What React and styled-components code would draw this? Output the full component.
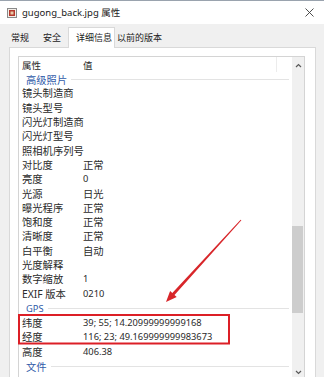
import React from "react";
import styled, { createGlobalStyle } from "styled-components";

const Global = createGlobalStyle`
  html, body { margin: 0; padding: 0; background: #f0f0f0; }
  body { width: 324px; height: 377px; overflow: hidden; font-family: "Noto Sans", "Noto Sans CJK SC", sans-serif; color: #2a2a2a; }
`;

const Window = styled.div`
  position: relative;
  width: 324px;
  height: 377px;
  overflow: hidden;
  display: flex;
  flex-direction: column;
  background: #f0f0f0;
  border-top: 1px solid #9aa3ae;
  box-sizing: border-box;
`;

const TitleBar = styled.div`
  height: 23px;
  flex: none;
  background: #fff;
  display: flex;
  align-items: center;
  padding: 0 10px 0 7px;
  gap: 5px;
`;

const Title = styled.div`
  flex: 1;
  font-size: 9.5px;
  line-height: 12px;
  color: #1a1a1a;
`;

const TabStrip = styled.div`
  height: 23px;
  flex: none;
  display: flex;
  align-items: flex-end;
  padding-left: 4px;
`;

const Tab = styled.div`
  height: ${(p) => (p.$active ? 21 : 19)}px;
  box-sizing: border-box;
  display: flex;
  align-items: center;
  padding: 0 ${(p) => p.$pr}px 2px ${(p) => p.$pl}px;
  margin-bottom: ${(p) => (p.$active ? -1 : 0)}px;
  font-size: 9px;
  color: #222;
  white-space: nowrap;
  background: ${(p) => (p.$active ? "#fff" : "transparent")};
  border: 1px solid ${(p) => (p.$active ? "#d9d9d9" : "transparent")};
  border-bottom: none;
  position: relative;
  z-index: 1;
`;

const Body = styled.div`
  flex: 1;
  padding: 0 8px 0 9px;
  display: flex;
  min-height: 0;
`;

const Panel = styled.div`
  flex: 1;
  background: #fff;
  border: 1px solid #d9d9d9;
  border-bottom: none;
  padding: 8px 10px 0 8px;
`;

const ListView = styled.div`
  height: 326px;
  box-sizing: border-box;
  border: 1px solid #d4d4d4;
  display: flex;
  overflow: hidden;
`;

const Table = styled.div`
  flex: 1;
  display: flex;
  flex-direction: column;
`;

const HeaderRow = styled.div`
  height: 15px;
  flex: none;
  display: grid;
  grid-template-columns: 64px 194px 1fr;
  font-size: 9.5px;
  align-items: center;
  color: #2a2a2a;
`;

const HeaderCell = styled.div`
  padding-left: ${(p) => p.$pl}px;
  height: 100%;
  display: flex;
  align-items: center;
  border-right: ${(p) => (p.$divider ? "1px solid #ececec" : "none")};
`;

const Row = styled.div`
  height: 14.3px;
  flex: none;
  display: grid;
  grid-template-columns: 64px 1fr;
  align-items: center;
  white-space: nowrap;
`;

const Name = styled.div`
  padding-left: 3px;
  font-size: 10.3px;
  line-height: 14px;
`;

const Value = styled.div`
  font-size: ${(p) => (p.$latin ? 9.3 : 10.3)}px;
  line-height: 14px;
`;

const GroupRow = styled.div`
  height: ${(p) => p.$h}px;
  flex: none;
  display: flex;
  align-items: center;
  gap: 4px;
  padding: 0 3px 0 7px;
  font-size: ${(p) => (p.$latin ? 9.3 : 10.3)}px;
  color: #2f5aa8;
`;

const GroupLine = styled.div`
  flex: 1;
  height: 1px;
  background: #e3e3e3;
`;

const ScrollBar = styled.div`
  width: 12px;
  flex: none;
  display: flex;
  flex-direction: column;
  background: #f0f0f0;
`;

const ArrowBtn = styled.div`
  height: 17px;
  flex: none;
  display: flex;
  align-items: center;
  justify-content: center;
`;

const Track = styled.div`
  flex: 1;
  display: flex;
  flex-direction: column;
`;

const Thumb = styled.div`
  margin: 152px 1px 0 0;
  height: 87px;
  background: #cdcdcd;
`;

const Annotation = styled.svg`
  position: absolute;
  left: 0;
  top: 0;
  pointer-events: none;
`;

const rows = [
  { g: "高级照片", h: 14.3 },
  { n: "镜头制造商", v: "" },
  { n: "镜头型号", v: "" },
  { n: "闪光灯制造商", v: "" },
  { n: "闪光灯型号", v: "" },
  { n: "照相机序列号", v: "" },
  { n: "对比度", v: "正常" },
  { n: "亮度", v: "0" },
  { n: "光源", v: "日光" },
  { n: "曝光程序", v: "正常" },
  { n: "饱和度", v: "正常" },
  { n: "清晰度", v: "正常" },
  { n: "白平衡", v: "自动" },
  { n: "光度解释", v: "" },
  { n: "数字缩放", v: "1" },
  { n: "EXIF 版本", v: "0210" },
  { g: "GPS", h: 15.3, latin: true },
  { n: "纬度", v: "39; 55; 14.20999999999168" },
  { n: "经度", v: "116; 23; 49.169999999983673" },
  { n: "高度", v: "406.38" },
  { g: "文件", h: 14.3 },
];

const isLatin = (s) => /^[\x00-\x7f]*$/.test(s);

const PhotoIcon = () => (
  <svg width="10" height="10" viewBox="0 0 10 10">
    <rect x="0.5" y="0.5" width="9" height="9" fill="#f4efe9" stroke="#8a8a8a" />
    <rect x="2" y="2" width="6" height="6" fill="#b4382c" />
    <rect x="3.5" y="3.5" width="3" height="3" fill="#e9c9a8" />
  </svg>
);

const CloseIcon = () => (
  <svg width="9" height="9" viewBox="0 0 9 9">
    <path d="M0.5 0.5 L8.5 8.5 M8.5 0.5 L0.5 8.5" stroke="#3a3a3a" strokeWidth="0.9" />
  </svg>
);

const Chevron = ({ up }) => (
  <svg width="7" height="5" viewBox="0 0 7 5">
    <polyline
      points={up ? "1,4 3.5,1.5 6,4" : "1,1 3.5,3.5 6,1"}
      fill="none"
      stroke="#5a5a5a"
      strokeWidth="1.2"
    />
  </svg>
);

export default function App() {
  return (
    <>
      <Global />
      <Window>
        <TitleBar>
          <PhotoIcon />
          <Title>gugong_back.jpg 属性</Title>
          <CloseIcon />
        </TitleBar>
        <TabStrip>
          <Tab $pl={6} $pr={6}>常规</Tab>
          <Tab $pl={6} $pr={6}>安全</Tab>
          <Tab $active $pl={7} $pr={2}>详细信息</Tab>
          <Tab $pl={1} $pr={7}>以前的版本</Tab>
        </TabStrip>
        <Body>
          <Panel>
            <ListView>
              <Table>
                <HeaderRow>
                  <HeaderCell $pl={3}>属性</HeaderCell>
                  <HeaderCell $pl={0} $divider>值</HeaderCell>
                  <HeaderCell $pl={0} />
                </HeaderRow>
                {rows.map((r, i) =>
                  r.g ? (
                    <GroupRow key={i} $h={r.h} $latin={r.latin}>
                      <span>{r.g}</span>
                      <GroupLine />
                    </GroupRow>
                  ) : (
                    <Row key={i}>
                      <Name>{r.n}</Name>
                      <Value $latin={isLatin(r.v)}>{r.v}</Value>
                    </Row>
                  )
                )}
              </Table>
              <ScrollBar>
                <ArrowBtn>
                  <Chevron up />
                </ArrowBtn>
                <Track>
                  <Thumb />
                </Track>
                <ArrowBtn>
                  <Chevron />
                </ArrowBtn>
              </ScrollBar>
            </ListView>
          </Panel>
        </Body>
        <Annotation width="324" height="377" viewBox="0 0 324 377">
          <rect x="19" y="314" width="210" height="28.5" fill="none" stroke="#dc1f26" strokeWidth="2" />
          <polygon
            points="241.4,219.3 240.6,218.7 172.3,291.9 170.1,289.9 166,301 176.7,295.9 174.5,293.9"
            fill="#d8262a"
          />
        </Annotation>
      </Window>
    </>
  );
}
